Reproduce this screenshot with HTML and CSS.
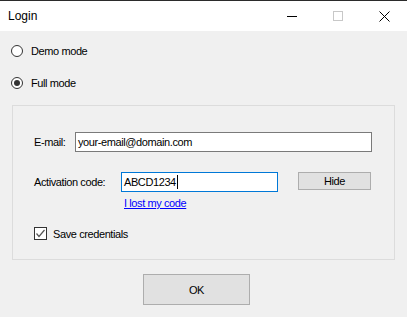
FILE: index.html
```html
<!DOCTYPE html>
<html lang="en">
<head>
    <meta charset="utf-8" />
    <title>Login</title>
    <link rel="stylesheet" href="styles.css">
</head>
<body>
<div class="window">
    <div class="titlebar">
        <span class="title">Login</span>
        <div class="caption">
            <span class="cap-btn">
                <svg width="10" height="10" viewBox="0 0 10 10"><path d="M0 5.5H10" stroke="#000" stroke-width="1"/></svg>
            </span>
            <span class="cap-btn">
                <svg width="10" height="10" viewBox="0 0 10 10"><rect x="0.5" y="0.5" width="9" height="9" fill="none" stroke="#c8c8c8"/></svg>
            </span>
            <span class="cap-btn">
                <svg width="11" height="11" viewBox="0 0 11 11"><path d="M0.5 0.5L10.5 10.5M10.5 0.5L0.5 10.5" stroke="#000" stroke-width="1"/></svg>
            </span>
        </div>
    </div>

    <div class="content">
        <div class="radio"><span class="radio-box"></span>Demo mode</div>
        <div class="radio checked"><span class="radio-box"></span>Full mode</div>

        <div class="group">
            <div class="row email-row">
                <span class="label email-label">E-mail:</span>
                <span class="textbox email-box">your-email@domain.com</span>
            </div>
            <div class="row code-row">
                <span class="label code-label">Activation code:</span>
                <span class="textbox code-box focused">ABCD1234<span class="caret"></span></span>
                <span class="button hide-btn">Hide</span>
            </div>
            <a class="link" href="#">I lost my code</a>
            <div class="check">
                <span class="check-box">
                    <svg width="11" height="11" viewBox="0 0 11 11"><path d="M1.5 5.5L4 8.5L9.5 2" fill="none" stroke="#555" stroke-width="1.2"/></svg>
                </span>
                Save credentials
            </div>
        </div>

        <span class="button ok-btn">OK</span>
    </div>
</div>
</body>
</html>
```

FILE: styles.css
```css
body {
    margin: 0;
    background: #f0f0f0;
    font-family: "Liberation Sans", Arial, sans-serif;
    font-size: 11px;
    letter-spacing: -0.4px;
    color: #000;
}

.window {
    width: 407px;
    height: 317px;
    border-top: 1px solid #2b2b2b;
    box-sizing: border-box;
}

.titlebar {
    height: 30px;
    background: #fff;
    display: flex;
    align-items: center;
    justify-content: space-between;
}
.title {
    padding-left: 8px;
    font-size: 12px;
    letter-spacing: 0;
}
.caption {
    display: flex;
    height: 100%;
}
.cap-btn {
    width: 46px;
    display: flex;
    align-items: center;
    justify-content: center;
}

.content {
    padding: 12px 0 0 11px;
}

.radio {
    display: flex;
    align-items: center;
    height: 16px;
    gap: 8px;
}
.radio + .radio {
    margin-top: 16px;
}
.radio-box {
    width: 12px;
    height: 12px;
    border: 1px solid #333;
    border-radius: 50%;
    box-sizing: border-box;
    background: #fff;
    display: flex;
    align-items: center;
    justify-content: center;
}
.radio.checked .radio-box::after {
    content: "";
    width: 6px;
    height: 6px;
    border-radius: 50%;
    background: #333;
}

.group {
    margin: 14px 0 0 1px;
    width: 383px;
    height: 155px;
    box-sizing: border-box;
    border: 1px solid #dcdcdc;
    padding: 26px 0 0 21px;
}

.row {
    display: flex;
    align-items: center;
    height: 20px;
}
.code-row {
    margin-top: 20px;
}
.label {
    flex: none;
}
.email-label {
    width: 41px;
}
.code-label {
    width: 87px;
}
.textbox {
    height: 20px;
    box-sizing: border-box;
    border: 1px solid #7a7a7a;
    background: #fff;
    padding-left: 2px;
    display: flex;
    align-items: center;
}
.email-box {
    width: 297px;
}
.code-box {
    width: 157px;
}
.textbox.focused {
    border-color: #0078d7;
}
.caret {
    width: 1px;
    height: 14px;
    margin-left: 1px;
    background: #000;
}

.button {
    box-sizing: border-box;
    border: 1px solid #adadad;
    background: #e1e1e1;
    display: flex;
    align-items: center;
    justify-content: center;
}
.hide-btn {
    width: 73px;
    height: 18px;
    margin-left: 20px;
    align-self: flex-start;
}

.link {
    display: block;
    width: max-content;
    margin: 5px 0 0 90px;
    color: #0000ff;
    line-height: 13px;
}

.check {
    display: flex;
    align-items: center;
    gap: 6px;
    margin-top: 17px;
}
.check-box {
    width: 13px;
    height: 13px;
    box-sizing: border-box;
    border: 1px solid #333;
    background: #fff;
    display: flex;
    align-items: center;
    justify-content: center;
}

.ok-btn {
    width: 107px;
    height: 31px;
    margin: 14px 0 0 132px;
}
```
